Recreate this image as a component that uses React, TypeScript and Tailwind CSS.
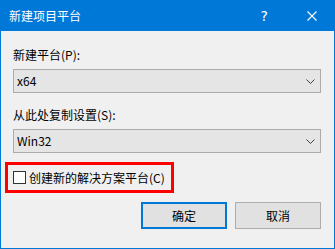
import React from "react";

const font = { fontFamily: '"Noto Sans CJK SC", "Noto Sans", sans-serif' };

function Combo({ value }: { value: string }) {
  return (
    <div className="h-[24px] w-full flex items-center bg-[#e5e5e5] border border-[#acacac] pl-[3px] pr-[5px]">
      <span className="text-[12px] leading-[16px] text-black">{value}</span>
      <svg className="ml-auto" width="9" height="5" viewBox="0 0 9 5">
        <path d="M0.5 0.5 L4.5 4.5 L8.5 0.5" fill="none" stroke="#404040" strokeWidth="1" />
      </svg>
    </div>
  );
}

export default function App() {
  return (
    <div
      className="w-[335px] h-[249px] flex flex-col bg-[#f0f0f0] border-x border-b border-[#0078d7] overflow-hidden"
      style={font}
    >
      <div className="h-[31px] shrink-0 bg-[#0078d7] flex items-center pl-[8px] text-white">
        <span className="text-[12px] leading-[16px]">新建项目平台</span>
        <span className="ml-auto text-[14px] leading-[16px] mr-[39px]" style={{ fontFamily: '"DejaVu Sans", sans-serif' }}>?</span>
        <svg className="mr-[17px]" width="10" height="10" viewBox="0 0 10 10">
          <path d="M0.5 0.5 L9.5 9.5 M9.5 0.5 L0.5 9.5" stroke="white" strokeWidth="1.1" />
        </svg>
      </div>
      <div className="flex flex-col pl-[12px] pr-[13px] pt-[16px]">
        <div className="text-[12px] leading-[16px] text-black">新建平台(P):</div>
        <div className="mt-[6px]">
          <Combo value="x64" />
        </div>
        <div className="mt-[14px] text-[12px] leading-[16px] text-black">从此处复制设置(S):</div>
        <div className="mt-[6px]">
          <Combo value="Win32" />
        </div>
        <div className="mt-[9px] -ml-[8px] w-[169px] h-[31px] border-[3px] border-[#ff0000] flex items-center pl-[5px]">
          <div className="w-[13px] h-[13px] bg-white border border-[#333333] shrink-0" />
          <span className="ml-[3px] text-[12px] leading-[16px] text-black">创建新的解决方案平台(C)</span>
        </div>
        <div className="mt-[9px] flex justify-end gap-[8px]">
          <div className="w-[86px] h-[27px] bg-[#e1e1e1] border-2 border-[#0078d7] flex items-center justify-center text-[12px] leading-[16px] text-black">
            确定
          </div>
          <div className="w-[86px] h-[27px] bg-[#e1e1e1] border border-[#adadad] flex items-center justify-center text-[12px] leading-[16px] text-black">
            取消
          </div>
        </div>
      </div>
    </div>
  );
}
